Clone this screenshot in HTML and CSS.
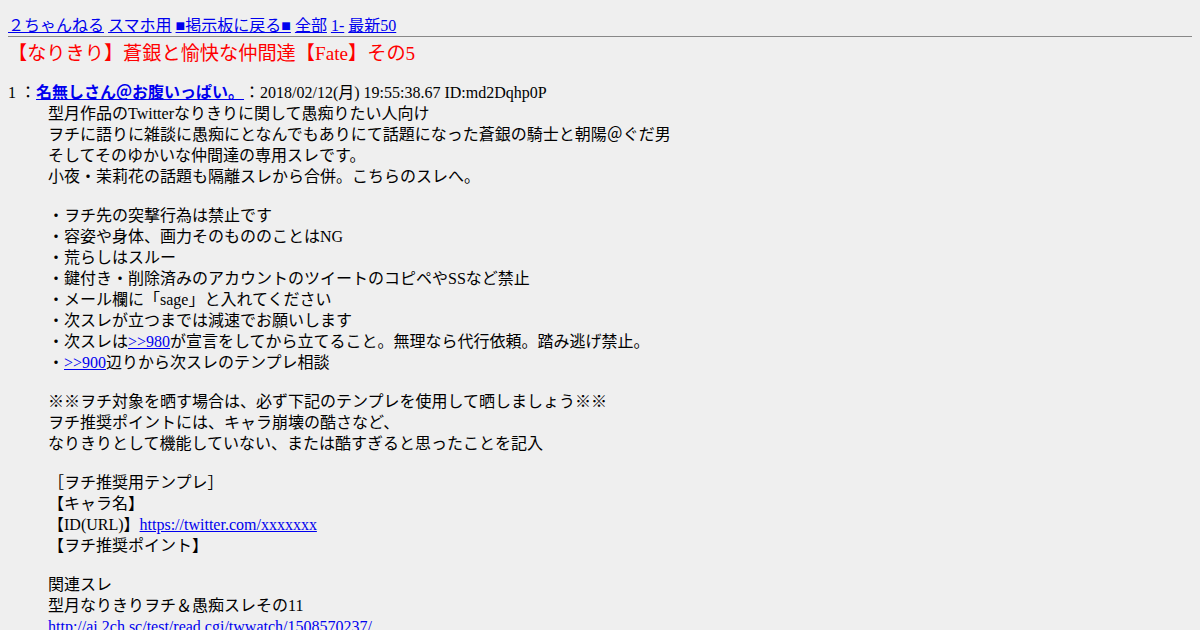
FILE: index.html
```html
<!DOCTYPE html>
<html lang="ja">
<head>
    <meta charset="utf-8">
    <title>【なりきり】蒼銀と愉快な仲間達【Fate】その5</title>
    <link rel="stylesheet" href="styles.css">
</head>
<body>
    <div class="menu">
        <a href="#">２ちゃんねる</a>
        <a href="#">スマホ用</a>
        <a href="#">■掲示板に戻る■</a>
        <a href="#">全部</a>
        <a href="#">1-</a>
        <a href="#">最新50</a>
    </div>
    <hr class="rule">
    <h1 class="thread-title">【なりきり】蒼銀と愉快な仲間達【Fate】その5</h1>

    <dl class="thread">
        <dt>1 ：<a href="#" class="name"><b>名無しさん＠お腹いっぱい。</b></a>：2018/02/12(月) 19:55:38.67 ID:md2Dqhp0P</dt>
        <dd>
            <p>型月作品のTwitterなりきりに関して愚痴りたい人向け<br>
            ヲチに語りに雑談に愚痴にとなんでもありにて話題になった蒼銀の騎士と朝陽＠ぐだ男<br>
            そしてそのゆかいな仲間達の専用スレです。<br>
            小夜・茉莉花の話題も隔離スレから合併。こちらのスレへ。</p>

            <p>・ヲチ先の突撃行為は禁止です<br>
            ・容姿や身体、画力そのもののことはNG<br>
            ・荒らしはスルー<br>
            ・鍵付き・削除済みのアカウントのツイートのコピペやSSなど禁止<br>
            ・メール欄に「sage」と入れてください<br>
            ・次スレが立つまでは減速でお願いします<br>
            ・次スレは<a href="#">&gt;&gt;980</a>が宣言をしてから立てること。無理なら代行依頼。踏み逃げ禁止。<br>
            ・<a href="#">&gt;&gt;900</a>辺りから次スレのテンプレ相談</p>

            <p>※※ヲチ対象を晒す場合は、必ず下記のテンプレを使用して晒しましょう※※<br>
            ヲチ推奨ポイントには、キャラ崩壊の酷さなど、<br>
            なりきりとして機能していない、または酷すぎると思ったことを記入</p>

            <p>［ヲチ推奨用テンプレ］<br>
            【キャラ名】<br>
            【ID(URL)】<a href="#">https://twitter.com/xxxxxxx</a><br>
            【ヲチ推奨ポイント】</p>

            <p>関連スレ<br>
            型月なりきりヲチ＆愚痴スレその11<br>
            <a href="#">http://ai.2ch.sc/test/read.cgi/twwatch/1508570237/</a></p>
        </dd>
    </dl>
</body>
</html>
```

FILE: styles.css
```css
body {
    margin: 8px;
    background-color: #efefef;
    color: #000;
    font-family: "Liberation Serif", "Noto Sans CJK JP", serif;
    font-size: 16px;
    line-height: 21px;
    text-spacing-trim: space-all;
}

a {
    color: #0000ee;
}

.menu {
    padding-top: 7px;
}

.rule {
    height: 1px;
    margin: 0;
    border: 0;
    background-color: #888;
}

.thread-title {
    margin: 4px 0 0;
    color: #ff0000;
    font-size: 19.2px;
    font-weight: normal;
    line-height: 25px;
}

.thread {
    margin: 16px 0 0;
}

    .thread dt {
        margin: 0;
    }

    .thread dd {
        margin: 0 0 0 40px;
    }

        .thread dd p {
            margin: 0 0 18px;
        }
```
